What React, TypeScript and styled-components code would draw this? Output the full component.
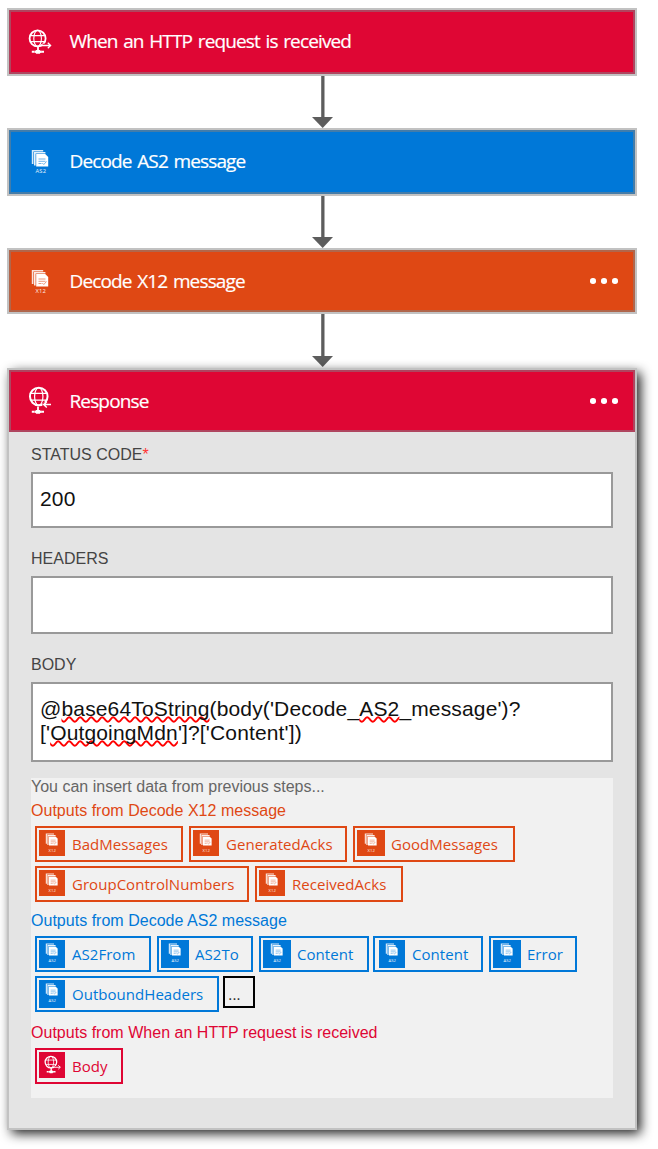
import React from 'react';
import styled, { createGlobalStyle } from 'styled-components';

const RED = '#df0634';
const BLUE = '#0078d8';
const ORANGE = '#df4814';

const GlobalStyle = createGlobalStyle`
  * { box-sizing: border-box; }
  body { margin: 0; background: #fff; font-family: "Liberation Sans", Arial, sans-serif; }
`;

const Page = styled.main`
  width: 658px;
  height: 1149px;
  padding: 8px 21px 0 7px;
  overflow: hidden;
  display: flex;
  flex-direction: column;
`;

const Step = styled.section<{ $height: number }>`
  flex: none;
  height: ${p => p.$height}px;
  border: 2px solid #c2c2c2;
`;

const Header = styled.header<{ $color: string; $edge: string; $height?: string }>`
  height: ${p => p.$height ?? '100%'};
  display: flex;
  align-items: flex-start;
  padding: 8px 15px 0 9px;
  background: ${p => p.$color};
  border: 2px solid ${p => p.$edge};
`;

const Title = styled.h1`
  flex: 1;
  margin: 0 0 0 9.5px;
  color: #fff;
  font: 400 19px/42px "Open Sans", "Noto Sans", sans-serif;
  letter-spacing: -0.86px;
  word-spacing: 1.5px;
  -webkit-text-stroke: 0.2px #fff;
  white-space: nowrap;
`;

const Dots = styled.div`
  display: flex;
  gap: 5.5px;
  margin-top: 18px;
  span { width: 5.6px; height: 5.6px; border-radius: 50%; background: #fff; }
`;

const Connector = styled.svg`
  flex: none;
  display: block;
  margin-left: 304px;
`;

const ResponseCard = styled(Step)`
  background: #e4e4e4;
  box-shadow: 3.5px 3.5px 11px rgba(0, 0, 0, 0.9);
`;

const Form = styled.div`
  padding: 10px 22px 0;
`;

const Label = styled.label`
  display: block;
  height: 24px;
  font-size: 16px;
  line-height: 26px;
  color: #444;
  em { color: #f33; font-style: normal; }
`;

const Field = styled.div<{ $height: number; $after: number }>`
  height: ${p => p.$height}px;
  margin: 6px 0 ${p => p.$after}px;
  padding: 13px 7px;
  background: #fff;
  border: 2px solid #999;
  color: #111;
  font-size: 21px;
  line-height: 24px;
  letter-spacing: 0.15px;
  white-space: nowrap;
`;

const Misspelt = styled.span`
  text-decoration: underline wavy #f00 1.6px;
  text-decoration-skip-ink: none;
  text-underline-offset: 0px;
`;

const Outputs = styled.div`
  height: 320px;
  background: #f1f1f1;
  font-size: 16px;
`;

const Hint = styled.p`
  margin: 0;
  height: 20px;
  line-height: 18px;
  color: #666;
`;

const Group = styled.section<{ $color: string; $after: number }>`
  color: ${p => p.$color};
  margin-bottom: ${p => p.$after}px;
`;

const GroupTitle = styled.h2`
  margin: 0;
  height: 28px;
  font-size: 16px;
  font-weight: 400;
  line-height: 25px;
  letter-spacing: 0.02px;
`;

const ChipRow = styled.div`
  display: flex;
  align-items: flex-start;
  gap: 6px;
  padding-left: 4px;
  & + & { margin-top: 4px; }
`;

const Chip = styled.div<{ $width: number; $shifted?: boolean }>`
  flex: none;
  width: ${p => p.$width}px;
  height: 36px;
  margin-left: ${p => (p.$shifted ? -2 : 0)}px;
  padding: 2px 2px 2px ${p => (p.$shifted ? 4 : 2)}px;
  display: flex;
  border: 2px solid currentColor;
  font: 400 15px/29px "Open Sans", "Noto Sans", sans-serif;
  letter-spacing: 0.04px;
  white-space: nowrap;
`;

const Badge = styled.span<{ $color: string; $height: number; $wide?: boolean }>`
  flex: none;
  width: ${p => (p.$wide ? 28 : 26)}px;
  height: ${p => p.$height}px;
  margin-right: ${p => (p.$wide ? 6 : 7)}px;
  padding-left: ${p => (p.$wide ? 1 : 0)}px;
  background: ${p => p.$color};
  svg { display: block; }
`;

const More = styled.button`
  width: 32px;
  height: 32px;
  margin-left: -2px;
  padding: 5px 0 0 3px;
  background: none;
  border: 2px solid #000;
  color: #333;
  font: 16px "Liberation Sans", Arial, sans-serif;
  letter-spacing: -0.3px;
  text-align: left;
`;

function GlobeGlyph({ size = 40, box = '0 0 40 40', reply = false }) {
  return (
    <svg width={size} height={size} viewBox={box} fill="none" stroke="#fff">
      <g transform={reply ? 'translate(-.6 -3.7) scale(1.1)' : undefined}>
        <circle cx="17.6" cy="18.4" r="8" strokeWidth="1.8" />
        <ellipse cx="17.6" cy="18.4" rx="3.8" ry="8" strokeWidth="1.1" />
        <path d="M10.2 15.6h15M10.2 21.6h15" strokeWidth="1.1" />
      </g>
      {reply ? (
        <>
          <path d="M22.5 24.6H28" stroke={RED} strokeWidth="4.5" />
          <path d="M31 24.6h-7M26.8 21.7l-3.1 2.9 3.1 2.9" strokeWidth="1.5" />
        </>
      ) : (
        <>
          <path d="M22.5 25.5H27" stroke={RED} strokeWidth="3.5" />
          <path d="M19.5 25.5h11M27.8 22.8l2.8 2.7-2.8 2.7" strokeWidth="1.3" />
        </>
      )}
      <path d="M18 26.5v4.5" strokeWidth="1.8" />
      <path d="M11.8 31.8h2.7M21.3 31.8H24" strokeWidth="2" />
      <path d="M14.6 31.8h7" strokeWidth="2.2" />
      <path d="M16 30h4l.6 1.8-.6 2h-4l-.6-2z" fill="#fff" stroke="none" />
    </svg>
  );
}

function DocsGlyph({ label, ink, size = 40, box = '0 0 40 40', labelY = 32.9 }) {
  return (
    <svg width={size} height={size} viewBox={box} fill="#fff">
      <path d="M11.8 9.9h11.4v1.5h-9.8V24h-1.6z" opacity=".85" />
      <path d="M14 11.9h11.4v1.5h-9.8v12.2H14z" opacity=".9" />
      <path d="M16.2 13.9h9l3 3v9.5h-12z" />
      <path d="M18.5 19h7M18.5 21.3h7M18.5 23.5h3M22.3 23l1.5 1.5 2.7-3" fill="none" stroke={ink} strokeWidth=".8" opacity=".7" />
      <text x="20.8" y={labelY} textAnchor="middle" fontFamily="Open Sans, sans-serif" fontSize="5.8" letterSpacing=".2" opacity=".9">
        {label}
      </text>
    </svg>
  );
}

function Arrow({ height, tip = height }: { height: number; tip?: number }) {
  return (
    <Connector width="23" height={height} viewBox={`0 0 23 ${height}`} fill="#5d5d5d">
      <path d={`M10.2 0h3.3v${tip - 10}h-3.3z`} />
      <path d={`M1 ${tip - 11}h21L11.7 ${tip}z`} />
    </Connector>
  );
}

const Menu = () => <Dots><span /><span /><span /></Dots>;

interface TokenProps {
  kind: 'X12' | 'AS2' | 'HTTP';
  width: number;
  shifted?: boolean;
  wide?: boolean;
  children: string;
}

function Token({ kind, width, shifted, wide, children }: TokenProps) {
  const color = kind === 'X12' ? ORANGE : kind === 'AS2' ? BLUE : RED;
  return (
    <Chip $width={width} $shifted={shifted}>
      <Badge $color={color} $height={kind === 'AS2' ? 28 : 26} $wide={wide}>
        {kind === 'HTTP'
          ? <GlobeGlyph size={26} box="1.1 4.4 36 36" />
          : <DocsGlyph label={kind} ink={color} size={26} box="2.4 5 36 36" labelY={35} />}
      </Badge>
      {children}
    </Chip>
  );
}

export default function App() {
  return (
    <>
      <GlobalStyle />
      <Page>
        <Step $height={68}>
          <Header $color={RED} $edge="#af455f">
            <GlobeGlyph />
            <Title>When an HTTP request is received</Title>
          </Header>
        </Step>
        <Arrow height={52} />
        <Step $height={68}>
          <Header $color={BLUE} $edge="#437ca9">
            <DocsGlyph label="AS2" ink={BLUE} />
            <Title>Decode AS2 message</Title>
          </Header>
        </Step>
        <Arrow height={52} />
        <Step $height={66}>
          <Header $color={ORANGE} $edge="#b0664c">
            <DocsGlyph label="X12" ink={ORANGE} />
            <Title>Decode X12 message</Title>
            <Menu />
          </Header>
        </Step>
        <Arrow height={54} tip={53} />
        <ResponseCard $height={762}>
          <Header $color={RED} $edge="#af455f" $height="62px">
            <GlobeGlyph reply />
            <Title>Response</Title>
            <Menu />
          </Header>
          <Form>
            <Label>STATUS CODE<em>*</em></Label>
            <Field $height={56} $after={18}>200</Field>
            <Label>HEADERS</Label>
            <Field $height={58} $after={18} />
            <Label>BODY</Label>
            <Field $height={80} $after={16}>
              @<Misspelt>base64ToString</Misspelt>(body('Decode_<Misspelt>AS2</Misspelt>_message')?
              <br />
              ['<Misspelt>OutgoingMdn</Misspelt>']?['Content'])
            </Field>
            <Outputs>
              <Hint>You can insert data from previous steps...</Hint>
              <Group $color={ORANGE} $after={6}>
                <GroupTitle>Outputs from Decode X12 message</GroupTitle>
                <ChipRow>
                  <Token kind="X12" width={148}>BadMessages</Token>
                  <Token kind="X12" width={158}>GeneratedAcks</Token>
                  <Token kind="X12" width={162} wide>GoodMessages</Token>
                </ChipRow>
                <ChipRow>
                  <Token kind="X12" width={214}>GroupControlNumbers</Token>
                  <Token kind="X12" width={148}>ReceivedAcks</Token>
                </ChipRow>
              </Group>
              <Group $color={BLUE} $after={8}>
                <GroupTitle>Outputs from Decode AS2 message</GroupTitle>
                <ChipRow>
                  <Token kind="AS2" width={116}>AS2From</Token>
                  <Token kind="AS2" width={96} wide>AS2To</Token>
                  <Token kind="AS2" width={110} wide>Content</Token>
                  <Token kind="AS2" width={110} shifted>Content</Token>
                  <Token kind="AS2" width={88} wide>Error</Token>
                </ChipRow>
                <ChipRow>
                  <Token kind="AS2" width={184}>OutboundHeaders</Token>
                  <More>...</More>
                </ChipRow>
              </Group>
              <Group $color={RED} $after={0}>
                <GroupTitle>Outputs from When an HTTP request is received</GroupTitle>
                <ChipRow>
                  <Token kind="HTTP" width={88}>Body</Token>
                </ChipRow>
              </Group>
            </Outputs>
          </Form>
        </ResponseCard>
      </Page>
    </>
  );
}
